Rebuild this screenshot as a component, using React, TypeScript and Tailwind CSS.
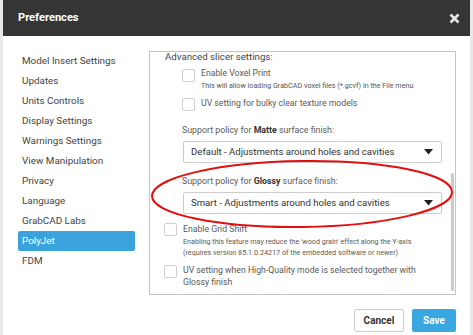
import React from "react";

const font = { fontFamily: 'Roboto, "Noto Sans", sans-serif' };

function Box() {
  return <div className="w-[13px] h-[13px] shrink-0 border border-[#cfcfcf] rounded-[2px] bg-white" />;
}

function Select({ text }: { text: string }) {
  return (
    <div className="ml-[33px] w-[259px] h-[22px] border border-[#cccccc] rounded-[2px] flex items-center justify-between pl-[7px] pr-[8px] text-[9.6px] text-[#333] whitespace-nowrap">
      <span>{text}</span>
      <svg width="9" height="6" viewBox="0 0 9 6"><path d="M0 0 L9 0 L4.5 5.5 Z" fill="#222" /></svg>
    </div>
  );
}

const nav = [
  "Model Insert Settings",
  "Updates",
  "Units Controls",
  "Display Settings",
  "Warnings Settings",
  "View Manipulation",
  "Privacy",
  "Language",
  "GrabCAD Labs",
  "PolyJet",
  "FDM",
];

export default function App() {
  return (
    <div className="relative w-[473px] h-[335px] bg-[#e6e8ea] pl-[3px] overflow-hidden" style={font}>
      <div className="w-[467px] h-[335px] bg-white flex flex-col">
        <div className="h-[36px] bg-[#353535] flex items-center justify-between pl-[15px] pr-[10px]">
          <span className="text-white font-bold text-[11.1px]">Preferences</span>
          <svg width="11" height="11" viewBox="0 0 11 11"><path d="M1.5 1.5 L9.5 9.5 M9.5 1.5 L1.5 9.5" stroke="#e6e6e6" strokeWidth="2.6" /></svg>
        </div>
        <div className="flex flex-1">
          <div className="w-[146px] pt-[15px] pl-[15px]">
            {nav.map((n) => (
              <div
                key={n}
                className={
                  n === "PolyJet"
                    ? "w-[117px] h-[20px] flex items-center pl-[4px] text-[9.9px] text-white bg-[#3aa3dc] rounded-[2px] whitespace-nowrap"
                    : "w-[117px] h-[20px] flex items-center pl-[4px] text-[9.9px] text-[#444] whitespace-nowrap"
                }
              >
                {n}
              </div>
            ))}
          </div>
          <div className="flex flex-col">
            <div className="relative mt-[15px] w-[307px] h-[244px] border border-[#c4c4c4] overflow-hidden">
              <div className="flex flex-col text-[#5a5a5a] whitespace-nowrap">
                <div className="mt-[-3px] h-[16px] leading-[16px] pl-[15px] text-[9.7px] text-[#444]">Advanced slicer settings:</div>
                <div className="mt-[2px] pl-[32px] flex">
                  <div className="mt-[2px]"><Box /></div>
                  <div className="ml-[6px] flex flex-col">
                    <div className="h-[13px] leading-[13px] text-[8.7px]">Enable Voxel Print</div>
                    <div className="h-[11px] leading-[11px] text-[7.2px] text-[#555]">This will allow loading GrabCAD voxel files (*.gcvf) in the File menu</div>
                  </div>
                </div>
                <div className="mt-[6px] pl-[32px] flex items-center h-[14px]">
                  <Box />
                  <div className="ml-[6px] text-[8.7px]">UV setting for bulky clear texture models</div>
                </div>
                <div className="mt-[11px] h-[16px] leading-[16px] pl-[32px] text-[8.8px]">
                  Support policy for <b className="text-[#333]">Matte</b> surface finish:
                </div>
                <div className="mt-[3px]"><Select text="Default - Adjustments around holes and cavities" /></div>
                <div className="mt-[10px] h-[16px] leading-[16px] pl-[32px] text-[8.8px]">
                  Support policy for <b className="text-[#333]">Glossy</b> surface finish:
                </div>
                <div className="mt-[3px]"><Select text="Smart - Adjustments around holes and cavities" /></div>
                <div className="mt-[8px] pl-[14px] flex">
                  <div className="mt-[1px]"><Box /></div>
                  <div className="ml-[6px] flex flex-col">
                    <div className="h-[14px] leading-[14px] text-[8.7px]">Enable Grid Shift</div>
                    <div className="h-[11px] leading-[11px] text-[7.2px]">Enabling this feature may reduce the 'wood grain' effect along the Y-axis</div>
                    <div className="h-[11px] leading-[11px] text-[7.2px]">(requires version 85.1.0.24217 of the embedded software or newer)</div>
                  </div>
                </div>
                <div className="mt-[6px] pl-[14px] flex">
                  <div className="mt-[1px]"><Box /></div>
                  <div className="ml-[6px] flex flex-col text-[8.7px]">
                    <div className="h-[12px] leading-[12px]">UV setting when High-Quality mode is selected together with</div>
                    <div className="h-[12px] leading-[12px]">Glossy finish</div>
                  </div>
                </div>
              </div>
              <div className="absolute left-[301px] top-[121px] w-[3px] h-[118px] bg-[#c9c9c9] rounded-full" />
            </div>
            <div className="mt-[14px] flex justify-end gap-[8px] w-[307px]">
              <button className="w-[50px] h-[23px] border border-[#cccccc] rounded-[2px] bg-white text-[10px] font-bold text-[#333]">Cancel</button>
              <button className="w-[44px] h-[23px] rounded-[2px] bg-[#3aa8e0] text-[10px] font-bold text-white">Save</button>
            </div>
          </div>
        </div>
      </div>
      <svg className="absolute left-0 top-0 pointer-events-none" width="473" height="335">
        <ellipse cx="302" cy="194" rx="150" ry="33" fill="none" stroke="#e01010" strokeWidth="2" transform="rotate(-0.8 302 194)" />
      </svg>
    </div>
  );
}
